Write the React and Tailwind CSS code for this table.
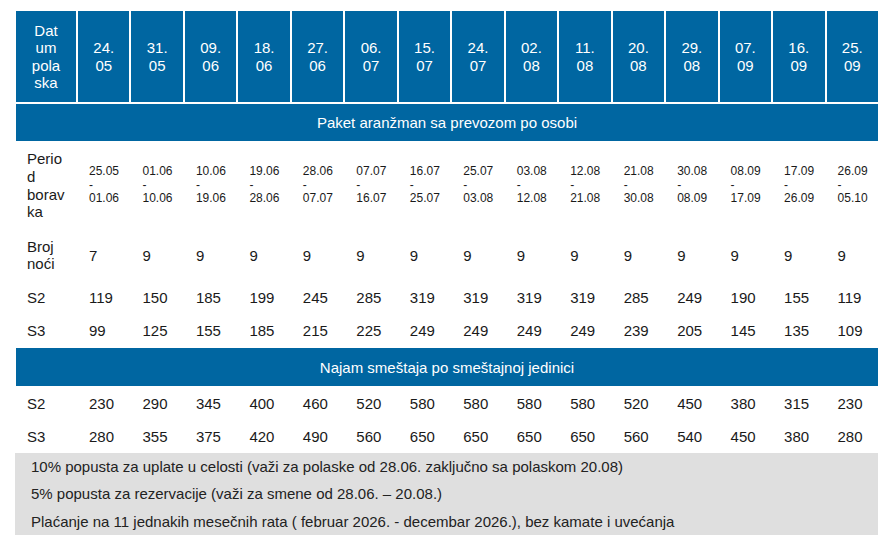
const dates = ['24.05', '31.05', '09.06', '18.06', '27.06', '06.07', '15.07', '24.07', '02.08', '11.08', '20.08', '29.08', '07.09', '16.09', '25.09']
const periods = [
  ['25.05', '01.06'], ['01.06', '10.06'], ['10.06', '19.06'], ['19.06', '28.06'], ['28.06', '07.07'],
  ['07.07', '16.07'], ['16.07', '25.07'], ['25.07', '03.08'], ['03.08', '12.08'], ['12.08', '21.08'],
  ['21.08', '30.08'], ['30.08', '08.09'], ['08.09', '17.09'], ['17.09', '26.09'], ['26.09', '05.10'],
]
const nights = [7, 9, 9, 9, 9, 9, 9, 9, 9, 9, 9, 9, 9, 9, 9]
const paketS2 = [119, 150, 185, 199, 245, 285, 319, 319, 319, 319, 285, 249, 190, 155, 119]
const paketS3 = [99, 125, 155, 185, 215, 225, 249, 249, 249, 249, 239, 205, 145, 135, 109]
const najamS2 = [230, 290, 345, 400, 460, 520, 580, 580, 580, 580, 520, 450, 380, 315, 230]
const najamS3 = [280, 355, 375, 420, 490, 560, 650, 650, 650, 650, 560, 540, 450, 380, 280]

const grid = 'grid grid-cols-[60px_repeat(15,minmax(0,1fr))] gap-x-[2px]'

const Row = ({ label, values, className = 'py-[7px]' }) => (
  <div className={`${grid} items-center mt-[2px]`}>
    <div className={`pl-[11px] ${className}`}>{label}</div>
    {values.map((v, i) => (
      <div key={i} className={`pl-[11px] ${className}`}>{v}</div>
    ))}
  </div>
)

const Band = ({ children, h }) => (
  <div className={`mt-[2px] flex items-center justify-center bg-[#0066a1] text-white ${h}`}>{children}</div>
)

export default function App() {
  return (
    <div className="bg-white min-h-[550px] pt-[11px] pl-[16px] font-['Liberation_Sans',Arial,sans-serif] text-[15px] leading-[17.25px] text-[#1a1a1a]">
      <div className="w-[862px]">
        <div className={`${grid} h-[91px] text-white text-center`}>
          <div className="bg-[#0066a1] flex items-center justify-center">
            <span>Dat<br />um<br />pola<br />ska</span>
          </div>
          {dates.map((d) => (
            <div key={d} className="bg-[#0066a1] flex items-center justify-center">
              <span>{d.slice(0, 3)}<br />{d.slice(3)}</span>
            </div>
          ))}
        </div>

        <Band h="h-[37px]">Paket aranžman sa prevozom po osobi</Band>

        <div className={`${grid} items-center mt-[2px] pt-[7px] pb-[8px]`}>
          <div className="pl-[11px] leading-[17.8px]">Perio<br />d<br />borav<br />ka</div>
          {periods.map(([a, b]) => (
            <div key={a} className="pl-[11px] text-[12px] leading-[13.6px]">
              {a}<br />-<br />{b}
            </div>
          ))}
        </div>

        <Row label={<span>Broj<br />noći</span>} values={nights} />
        <Row label="S2" values={paketS2} />
        <Row label="S3" values={paketS3} />

        <Band h="h-[38px]">Najam smeštaja po smeštajnoj jedinici</Band>

        <Row label="S2" values={najamS2} />
        <Row label="S3" values={najamS3} />

        <div className="-ml-[1px] bg-[#dfdfdf] pl-[16px] text-[#222] leading-[27.5px]">
          <p>10% popusta za uplate u celosti (važi za polaske od 28.06. zaključno sa polaskom 20.08)</p>
          <p>5% popusta za rezervacije (važi za smene od 28.06. – 20.08.)</p>
          <p>Plaćanje na 11 jednakih mesečnih rata ( februar 2026. - decembar 2026.), bez kamate i uvećanja</p>
        </div>
      </div>
    </div>
  )
}
